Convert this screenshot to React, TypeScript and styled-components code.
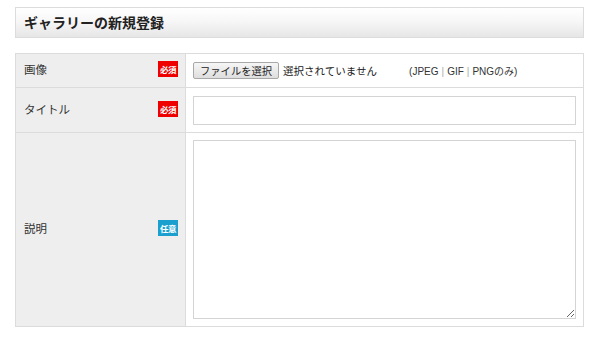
import React from "react";
import styled, { createGlobalStyle } from "styled-components";

const Global = createGlobalStyle`
  html, body { margin: 0; padding: 0; background: #fff; }
  body { font-family: "Liberation Sans", "Noto Sans CJK JP", sans-serif; color: #333; }
  * { box-sizing: border-box; }
`;

const Page = styled.div`
  padding: 7px 16px 0 15px;
`;

const Heading = styled.h2`
  margin: 0;
  height: 31px;
  display: flex;
  align-items: center;
  padding: 0 0 2px 8px;
  border: 1px solid #dcdcdc;
  background: linear-gradient(#ffffff 0%, #f7f7f7 45%, #e6e6e6 100%);
  font-family: "Noto Sans CJK JP", sans-serif;
  font-size: 14px;
  font-weight: 700;
  color: #222;
`;

const Form = styled.div`
  margin-top: 15px;
  display: grid;
  grid-template-columns: 170px 1fr;
  grid-template-rows: 34px 45px 194px;
  border: 1px solid #dcdcdc;
  border-top: none;
`;

const LabelCell = styled.div`
  display: flex;
  align-items: center;
  justify-content: space-between;
  padding: 0 7px 3px 8px;
  background: #eeeeee;
  border-top: 1px solid #dcdcdc;
  border-right: 1px solid #dcdcdc;
  font-family: "Noto Sans CJK JP", sans-serif;
  font-size: 11.5px;
  color: #333;
`;

const Badge = styled.span<{ $tone: "required" | "optional" }>`
  display: inline-flex;
  align-items: center;
  justify-content: center;
  width: 20px;
  height: 16px;
  background: ${(p) => (p.$tone === "required" ? "#ee0000" : "#1a9fcf")};
  color: #fff;
  font-family: "Noto Sans CJK JP", sans-serif;
  font-size: 8.5px;
  font-weight: 700;
  letter-spacing: -0.5px;
`;

const ValueCell = styled.div<{ $align?: "center" | "stretch" }>`
  display: flex;
  align-items: ${(p) => p.$align ?? "center"};
  padding: 7px 7px 7px 7px;
  border-top: 1px solid #dcdcdc;
  font-family: "Noto Sans CJK JP", sans-serif;
  font-size: 10.5px;
  color: #222;
`;

const FileButton = styled.button`
  height: 17px;
  padding: 0 6px;
  border: 1px solid #a8a8a8;
  border-radius: 2px;
  background: linear-gradient(#f6f6f6, #dedede);
  font-family: "Noto Sans CJK JP", sans-serif;
  font-size: 10.3px;
  line-height: 15px;
  color: #222;
`;

const FileStatus = styled.span`
  margin-left: 4px;
  width: 126px;
`;

const Note = styled.span`
  font-family: "Liberation Sans", "Noto Sans CJK JP", sans-serif;
  font-size: 10px;
  color: #333;
`;

const Sep = styled.span`
  color: #aaa;
  margin: 0 3px;
`;

const TextInput = styled.input`
  width: 100%;
  height: 29px;
  border: 1px solid #d4d4d4;
  background: #fff;
  margin: 0;
  padding: 0 6px;
`;

const TextArea = styled.textarea`
  width: 100%;
  height: 100%;
  border: 1px solid #d4d4d4;
  background: #fff;
  margin: 0;
  padding: 6px;
  display: block;
`;

export default function App() {
  return (
    <>
      <Global />
      <Page>
        <Heading>ギャラリーの新規登録</Heading>
        <Form>
          <LabelCell>
            画像<Badge $tone="required">必須</Badge>
          </LabelCell>
          <ValueCell>
            <FileButton>ファイルを選択</FileButton>
            <FileStatus>選択されていません</FileStatus>
            <Note>
              (JPEG<Sep>|</Sep>GIF<Sep>|</Sep>PNGのみ)
            </Note>
          </ValueCell>
          <LabelCell>
            タイトル<Badge $tone="required">必須</Badge>
          </LabelCell>
          <ValueCell>
            <TextInput type="text" />
          </ValueCell>
          <LabelCell>
            説明<Badge $tone="optional">任意</Badge>
          </LabelCell>
          <ValueCell $align="stretch">
            <TextArea />
          </ValueCell>
        </Form>
      </Page>
    </>
  );
}
